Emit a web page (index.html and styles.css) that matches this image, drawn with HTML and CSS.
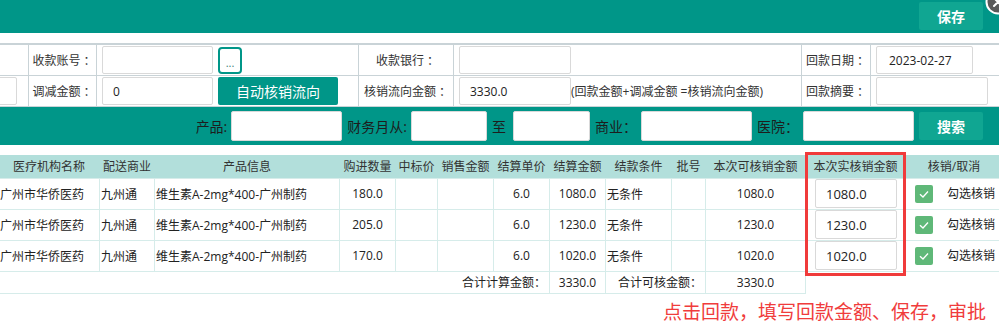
FILE: index.html
```html
<!DOCTYPE html>
<html lang="zh-CN">

<head>
    <meta charset="UTF-8">
    <meta name="viewport" content="width=device-width, initial-scale=1.0">
    <title>回款核销</title>

    <link rel="stylesheet" href="styles.css">
</head>

<body>
    <header class="top-bar">
        <button class="btn-light">保存</button>
        <span class="close-icon">
            <svg width="26" height="26" viewBox="0 0 26 26">
                <circle cx="13" cy="13" r="11.5" fill="#595959" stroke="#fff" stroke-width="2" />
                <path d="M9 9 L17 17 M17 9 L9 17" stroke="#fff" stroke-width="2" stroke-linecap="round" />
            </svg>
        </span>
    </header>

    <section class="form-table">
        <div class="cell"></div>
        <div class="cell label">收款账号<span class="colon">：</span></div>
        <div class="cell field">
            <input type="text" class="input w111" value="">
            <button class="btn-dots">...</button>
        </div>
        <div class="cell label">收款银行<span class="colon">：</span></div>
        <div class="cell field">
            <input type="text" class="input w112" value="">
        </div>
        <div class="cell label">回款日期<span class="colon">：</span></div>
        <div class="cell field">
            <input type="text" class="input w97" value="2023-02-27">
        </div>

        <div class="cell first"><input type="text" class="input w37" value=""></div>
        <div class="cell label">调减金额<span class="colon">：</span></div>
        <div class="cell field">
            <input type="text" class="input w111" value="0">
            <button class="btn-teal">自动核销流向</button>
        </div>
        <div class="cell label">核销流向金额<span class="colon">：</span></div>
        <div class="cell field">
            <input type="text" class="input w112" value="3330.0">
            <span class="hint">(回款金额+调减金额 =核销流向金额)</span>
        </div>
        <div class="cell label">回款摘要<span class="colon">：</span></div>
        <div class="cell field">
            <input type="text" class="input w112" value="">
        </div>
    </section>

    <section class="search-bar">
        <label>产品:</label>
        <input type="text" class="input s-wide">
        <label class="gap">财务月从:</label>
        <input type="text" class="input s-month">
        <label class="gap">至</label>
        <input type="text" class="input s-month to">
        <label class="gap">商业<span class="colon">：</span></label>
        <input type="text" class="input s-wide">
        <label class="gap">医院<span class="colon">：</span></label>
        <input type="text" class="input s-wide">
        <button class="btn-light search">搜索</button>
    </section>

    <div class="grid-wrap">
        <table class="grid">
            <colgroup>
                <col style="width:101px">
                <col style="width:55px">
                <col style="width:185px">
                <col style="width:56px">
                <col style="width:42px">
                <col style="width:56px">
                <col style="width:56px">
                <col style="width:56px">
                <col style="width:66px">
                <col style="width:34px">
                <col style="width:100px">
                <col style="width:100px">
                <col style="width:97px">
            </colgroup>
            <thead>
                <tr>
                    <th>医疗机构名称</th>
                    <th>配送商业</th>
                    <th>产品信息</th>
                    <th>购进数量</th>
                    <th>中标价</th>
                    <th>销售金额</th>
                    <th>结算单价</th>
                    <th>结算金额</th>
                    <th>结款条件</th>
                    <th>批号</th>
                    <th>本次可核销金额</th>
                    <th>本次实核销金额</th>
                    <th>核销/取消</th>
                </tr>
            </thead>
            <tbody>
                <tr class="row">
                    <td class="left">广州市华侨医药</td>
                    <td class="left">九州通</td>
                    <td class="left">维生素A-2mg*400-广州制药</td>
                    <td>180.0</td>
                    <td></td>
                    <td></td>
                    <td>6.0</td>
                    <td>1080.0</td>
                    <td class="left">无条件</td>
                    <td></td>
                    <td>1080.0</td>
                    <td><input type="text" class="input amount" value="1080.0"></td>
                    <td class="check"><span class="tick"><svg width="18" height="18" viewBox="0 0 18 18"><path d="M5 9.2 L8 12 L13 6.5" fill="none" stroke="#fff" stroke-width="1.3" /></svg></span>勾选核销</td>
                </tr>
                <tr class="row">
                    <td class="left">广州市华侨医药</td>
                    <td class="left">九州通</td>
                    <td class="left">维生素A-2mg*400-广州制药</td>
                    <td>205.0</td>
                    <td></td>
                    <td></td>
                    <td>6.0</td>
                    <td>1230.0</td>
                    <td class="left">无条件</td>
                    <td></td>
                    <td>1230.0</td>
                    <td><input type="text" class="input amount" value="1230.0"></td>
                    <td class="check"><span class="tick"><svg width="18" height="18" viewBox="0 0 18 18"><path d="M5 9.2 L8 12 L13 6.5" fill="none" stroke="#fff" stroke-width="1.3" /></svg></span>勾选核销</td>
                </tr>
                <tr class="row">
                    <td class="left">广州市华侨医药</td>
                    <td class="left">九州通</td>
                    <td class="left">维生素A-2mg*400-广州制药</td>
                    <td>170.0</td>
                    <td></td>
                    <td></td>
                    <td>6.0</td>
                    <td>1020.0</td>
                    <td class="left">无条件</td>
                    <td></td>
                    <td>1020.0</td>
                    <td><input type="text" class="input amount" value="1020.0"></td>
                    <td class="check"><span class="tick"><svg width="18" height="18" viewBox="0 0 18 18"><path d="M5 9.2 L8 12 L13 6.5" fill="none" stroke="#fff" stroke-width="1.3" /></svg></span>勾选核销</td>
                </tr>
                <tr class="total">
                    <td colspan="7" class="right">合计计算金额<span class="colon">：</span></td>
                    <td>3330.0</td>
                    <td colspan="2" class="right">合计可核金额<span class="colon">：</span></td>
                    <td>3330.0</td>
                    <td class="blank"></td>
                    <td class="blank"></td>
                </tr>
            </tbody>
        </table>
        <div class="mark-box"></div>
    </div>

    <p class="note">点击回款，填写回款金额、保存，审批</p>
</body>

</html>
```

FILE: styles.css
```css
* {
    box-sizing: border-box;
    margin: 0;
    font-family: "Open Sans", "Noto Sans CJK SC", sans-serif;
}

body {
    background: #fff;
    color: #333;
    font-size: 12px;
    width: 999px;
    overflow: hidden;
}

input,
button {
    font-family: "Open Sans", "Noto Sans CJK SC", sans-serif;
    outline: none;
}

/* centred full-width colon, as in the original font */
.colon {
    font-family: "Noto Sans CJK TC", sans-serif;
}

/* top bar */
.top-bar {
    position: relative;
    height: 33px;
    background: #009688;
    display: flex;
    justify-content: flex-end;
    align-items: flex-start;
    padding: 2px 16px 0 0;
}

.btn-light {
    width: 64px;
    height: 28px;
    border: none;
    border-radius: 2px;
    background: #10a692;
    color: #fff;
    font-size: 14px;
    font-weight: 700;
    cursor: pointer;
}

.close-icon {
    position: absolute;
    left: 985px;
    top: -11px;
    width: 26px;
    height: 26px;
}

/* form */
.form-table {
    margin-top: 10px;
    margin-left: -20px;
    display: grid;
    grid-template-columns: 49px 68px 262px 95px 348px 69px 150px;
    grid-auto-rows: 31px;
    border-top: 2px solid #c9d3d7;
}

.cell {
    border-right: 1px solid #c9d3d7;
    border-bottom: 1px solid #c9d3d7;
    display: flex;
    align-items: center;
}

.cell.label {
    justify-content: center;
    white-space: nowrap;
}

.cell.field {
    padding-left: 5px;
}

.cell.first {
    justify-content: flex-start;
}

.input {
    height: 28px;
    border: 1px solid #d9d9d9;
    border-radius: 2px;
    background: #fff;
    color: #222;
    font-size: 12px;
    padding: 0 10px;
}

.w111 { width: 111px; }
.w112 { width: 112px; }
.w97 { width: 97px; padding-left: 12px; }
.w37 { width: 37px; }

.btn-dots {
    width: 24px;
    height: 27px;
    margin-left: 5px;
    background: #fff;
    border: 2px solid #009688;
    border-radius: 4px;
    color: #3b7f78;
    font-size: 11px;
    padding: 4px 0 0;
}

.btn-teal {
    width: 120px;
    height: 28px;
    margin-left: 5px;
    border: none;
    border-radius: 2px;
    background: #009688;
    color: #fff;
    font-size: 14px;
}

.hint {
    white-space: nowrap;
    color: #333;
}

/* search */
.search-bar {
    height: 38px;
    background: #009688;
    display: flex;
    align-items: center;
    justify-content: flex-end;
    padding-right: 16px;
    font-size: 14px;
    color: #1d1d1d;
}

.search-bar label {
    margin-right: 4px;
    white-space: nowrap;
}

.search-bar label.gap {
    margin-left: 5px;
}

.search-bar .input {
    height: 30px;
}

.s-wide { width: 111px; }
.s-month { width: 76px; }
.s-month.to { margin-left: 3px; width: 77px; }

.btn-light.search {
    margin-left: 5px;
}

/* grid */
.grid-wrap {
    position: relative;
    margin-top: 10px;
}

.grid {
    margin-left: -2px;
    border-collapse: collapse;
    table-layout: fixed;
    width: 1003px;
}

.grid th {
    height: 23px;
    padding: 0;
    background: #b2dfdb;
    font-weight: 400;
    color: #333;
    white-space: nowrap;
    text-align: center;
}

.grid td {
    padding: 0;
    border: 1px solid #d6ecea;
    text-align: center;
    white-space: nowrap;
    color: #222;
}

.grid .row td {
    height: 31px;
}

.grid td.left {
    text-align: left;
    padding-left: 1px;
}

.grid td.right {
    text-align: right;
    padding-right: 3px;
}

.grid .total td {
    height: 22px;
}

.grid td.blank {
    border: none;
}

.grid .amount {
    width: 82px;
    height: 29px;
    padding: 0 10px;
    display: block;
    margin-left: 9px;
    font-size: 13px;
}

.grid td.check {
    text-align: left;
    padding-left: 9px;
    border-right: none;
}

.tick {
    display: inline-block;
    width: 18px;
    height: 18px;
    background: #5fb878;
    border-radius: 2px;
    vertical-align: middle;
    margin-right: 14px;
}

.tick svg {
    display: block;
}

.mark-box {
    position: absolute;
    left: 805px;
    top: -3px;
    width: 101px;
    height: 124px;
    border: 3px solid #f03b3b;
}

.note {
    text-align: right;
    padding-right: 13px;
    margin-top: 6px;
    font-size: 19px;
    line-height: 24px;
    color: #f03c3c;
}
```
